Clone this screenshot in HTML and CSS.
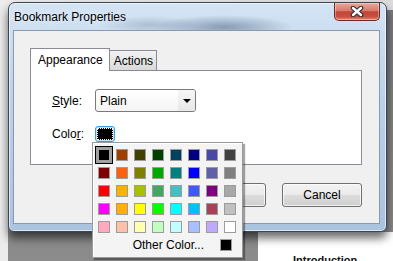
FILE: index.html
```html
<!DOCTYPE html>
<html lang="en">
<head>
    <meta charset="UTF-8">
    <meta name="viewport" content="width=device-width, initial-scale=1.0">
    <title>Bookmark Properties</title>
    <link rel="stylesheet" href="styles.css">
</head>
<body>
    <div class="desk">
        <div class="shade"></div>
        <div class="doc"><span class="doc-head">Introduction</span></div>

        <div class="window">
            <div class="titlebar">
                <span class="title">Bookmark Properties</span>
                <button class="close" aria-label="Close">
                    <svg width="14" height="11" viewBox="0 0 14 11">
                        <path d="M3 2 L11 9 M11 2 L3 9" stroke="#2b3038" stroke-width="4.6" stroke-linecap="round"/>
                        <path d="M3 2 L11 9 M11 2 L3 9" stroke="#ffffff" stroke-width="2.4" stroke-linecap="round"/>
                    </svg>
                </button>
            </div>
            <div class="client">
                <div class="tabs">
                    <div class="tab active">Appearance</div>
                    <div class="tab">Actions</div>
                </div>
                <div class="panel">
                    <div class="field">
                        <label class="label"><u>S</u>tyle:</label>
                        <div class="select">
                            <span class="select-text">Plain</span>
                            <span class="select-btn"><span class="arrow"></span></span>
                        </div>
                    </div>
                    <div class="field">
                        <label class="label">Colo<u>r</u>:</label>
                        <div class="color-btn"><span class="chip"></span></div>
                    </div>
                </div>
                <div class="actions">
                    <button class="btn">OK</button>
                    <button class="btn">Cancel</button>
                </div>
            </div>
        </div>

        <!-- colour dropdown opened over the dialog -->
        <div class="palette">
            <div class="swatches" id="swatches"></div>
            <div class="other">
                <span>Other Color...</span>
                <span class="swatch"><span class="fill black"></span></span>
            </div>
        </div>
    </div>

    <script>
        const colors = [
            '#000000', '#a04000', '#404000', '#004000', '#004060', '#000080', '#4848a8', '#404040',
            '#800000', '#ff6010', '#808000', '#00a800', '#008080', '#0000ff', '#6060a8', '#808080',
            '#ff0000', '#ffb000', '#a8c000', '#40a860', '#40c0c0', '#4058ff', '#800080', '#a8a8a8',
            '#ff00ff', '#ffb000', '#ffff00', '#00ff00', '#00ffff', '#00c0ff', '#a84058', '#c0c0c0',
            '#ffa8c0', '#ffc0a8', '#ffffb0', '#c0ffc0', '#c0ffff', '#a8c0ff', '#c0a8ff', '#ffffff'
        ];
        const swatches = document.getElementById('swatches');

        colors.forEach((color, i) => {
            const cell = document.createElement('div');
            cell.className = 'cell';
            const sw = document.createElement('span');
            sw.className = i === 0 ? 'swatch selected' : 'swatch';
            const fill = document.createElement('span');
            fill.className = 'fill';
            fill.style.background = color;
            sw.appendChild(fill);
            cell.appendChild(sw);
            swatches.appendChild(cell);
        });
    </script>
</body>
</html>
```

FILE: styles.css
```css
* {
    box-sizing: border-box;
}
body {
    margin: 0;
    font-family: "Liberation Sans", Arial, sans-serif;
    font-size: 12px;
    color: #000;
    overflow: hidden;
}
.desk {
    position: relative;
    width: 393px;
    height: 261px;
    background: linear-gradient(90deg, #ececec, #dcdcdc);
    overflow: hidden;
}
.shade {
    position: absolute;
    left: 8px;
    top: 10px;
    right: 0;
    bottom: 0;
    background: linear-gradient(#7a7a7a, #8c8c8c);
}
.doc {
    position: absolute;
    left: 258px;
    top: 232px;
    right: 0;
    bottom: 0;
    background: #fff;
    padding: 21px 0 0 35px;
}
.doc-head {
    font-size: 11px;
    font-weight: bold;
    color: #111;
}

/* dialog window */
.window {
    position: absolute;
    left: 8px;
    top: 2px;
    width: 379px;
    height: 230px;
    border: 1px solid #3a4656;
    border-radius: 7px 7px 6px 6px;
    padding: 0 0 0 4px;
    background:
        radial-gradient(ellipse 70px 12px at 215px 24px, rgba(80, 100, 128, 0.55), transparent),
        radial-gradient(ellipse 50px 9px at 140px 22px, rgba(110, 130, 155, 0.35), transparent),
        linear-gradient(#d4e4f4, #bcd2ea 40%, #a9c3e0);
    box-shadow: inset 0 0 0 1px rgba(255, 255, 255, 0.6), 0 6px 10px rgba(0, 0, 0, 0.6);
}
.titlebar {
    position: relative;
    height: 27px;
    display: flex;
    align-items: center;
    padding-left: 1px;
}
.title {
    font-size: 12px;
    color: #000;
    text-shadow: 0 0 6px rgba(255, 255, 255, 0.9);
}
.close {
    position: absolute;
    top: 0;
    right: 6px;
    width: 46px;
    height: 18px;
    padding: 0;
    border: 1px solid #6b2a22;
    border-top: none;
    border-radius: 0 0 5px 5px;
    background: linear-gradient(#e9a898, #d97a6c 45%, #c3433a 52%, #c8503f 80%, #e38a72);
    box-shadow: inset 0 0 0 1px rgba(255, 255, 255, 0.35);
    display: flex;
    align-items: center;
    justify-content: center;
}
.close svg {
    display: block;
}
.client {
    width: 367px;
    height: 194px;
    border: 1px solid #8a99ac;
    background: #f0f0f0;
    display: flex;
    flex-direction: column;
}

/* tabs */
.tabs {
    display: flex;
    align-items: flex-end;
    margin: 17px 0 0 16px;
    position: relative;
    z-index: 1;
}
.tab {
    height: 20px;
    padding: 0 3px 0 4px;
    border: 1px solid #898c95;
    border-bottom: none;
    border-left: none;
    background: linear-gradient(#f2f2f2, #e6e6e6 50%, #d9d9d9);
    display: flex;
    align-items: center;
}
.tab.active {
    height: 23px;
    padding: 0 6px 1px 7px;
    border-left: 1px solid #898c95;
    background: #fff;
    margin-bottom: -1px;
}
.panel {
    margin-left: 16px;
    width: 332px;
    height: 95px;
    border: 1px solid #898c95;
    background: #fff;
    padding: 18px 0 0 21px;
    display: flex;
    flex-direction: column;
    gap: 14px;
}
.field {
    display: flex;
    align-items: center;
}
.label {
    width: 43px;
}
.select {
    width: 101px;
    height: 23px;
    border: 1px solid #7a7a7a;
    border-radius: 3px;
    background: linear-gradient(#ffffff, #f4f4f4);
    display: flex;
    align-items: center;
}
.select-text {
    flex: 1;
    padding-left: 4px;
}
.select-btn {
    width: 17px;
    height: 100%;
    display: flex;
    align-items: center;
    justify-content: center;
    background: linear-gradient(#f6f6f6, #e8e8e8);
    border-radius: 0 2px 2px 0;
}
.arrow {
    width: 0;
    height: 0;
    border-left: 4px solid transparent;
    border-right: 4px solid transparent;
    border-top: 4px solid #000;
    margin-top: 1px;
}
.color-btn {
    width: 20px;
    height: 16px;
    border: 1px solid #3c9ee0;
    border-radius: 3px;
    padding: 1px;
    background: #bfe3fb;
}
.chip {
    display: block;
    width: 100%;
    height: 100%;
    background: #000;
    border: 1px dotted #fff;
}

/* OK / Cancel */
.actions {
    margin-top: 18px;
    padding-right: 17px;
    display: flex;
    justify-content: flex-end;
    gap: 16px;
}
.btn {
    width: 80px;
    height: 24px;
    font: inherit;
    color: #000;
    border: 1px solid #707070;
    border-radius: 3px;
    background: linear-gradient(#f2f2f2, #ebebeb 50%, #dddddd 50%, #cfcfcf);
    box-shadow: inset 0 0 0 1px rgba(255, 255, 255, 0.7);
    padding: 0;
}

/* colour palette popup */
.palette {
    position: absolute;
    left: 92px;
    top: 142px;
    width: 151px;
    height: 116px;
    border: 1px solid #9a9a9a;
    background: #f4f4f4;
    box-shadow: inset 1px 1px 0 #fff, 2px 2px 1px rgba(0, 0, 0, 0.35);
    padding: 3px 0 0 2px;
}
.swatches {
    display: grid;
    grid-template-columns: repeat(8, 18px);
    grid-auto-rows: 18px;
}
.cell {
    display: flex;
    align-items: center;
    justify-content: center;
}
.swatch {
    display: block;
    width: 12px;
    height: 12px;
    border: 1px solid #9c9c9c;
}
.swatch .fill {
    display: block;
    width: 100%;
    height: 100%;
}
.swatch.selected {
    width: 18px;
    height: 18px;
    border: 1px solid #000;
    background: #a0a0a0;
    padding: 3px;
}
.fill.black {
    background: #000;
}
.other {
    height: 18px;
    display: flex;
    align-items: center;
    justify-content: flex-end;
    gap: 16px;
    padding-right: 10px;
}
```
